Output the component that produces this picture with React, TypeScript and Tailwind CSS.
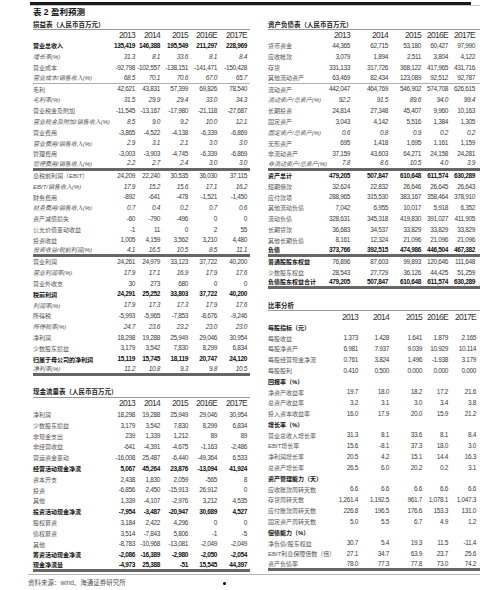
type Row = {
  l: string;
  v?: string[];
  b?: boolean;
  lb?: boolean;
  i?: boolean;
  line?: "thin" | "thick";
  sec?: boolean;
};

const LEFT_COLS = ["w-[26px]", "w-[25px]", "w-[28px]", "w-[29px]", "w-[30px]"];
const BS_COLS = ["w-[30px]", "w-[38px]", "w-[33px]", "w-[27px]", "w-[27px]"];
const RATIO_COLS = ["w-[30px]", "w-[31px]", "w-[33px]", "w-[26px]", "w-[28px]"];
const YEARS = ["2013", "2014", "2015", "2016E", "2017E"];

const r = (s: string) => s.split(" ");

const income: Row[] = [
  { l: "营业总收入", v: r("135,419 146,388 195,549 211,297 228,969"), b: true },
  { l: "增长率(%)", v: r("31.3 8.1 33.6 8.1 8.4"), i: true },
  { l: "营业成本", v: r("-92,798 -102,557 -138,151 -141,471 -150,428") },
  { l: "营业成本/销售收入(%)", v: r("68.5 70.1 70.6 67.0 65.7"), i: true, line: "thin" },
  { l: "毛利", v: r("42,621 43,831 57,399 69,826 78,540") },
  { l: "毛利率(%)", v: r("31.5 29.9 29.4 33.0 34.3"), i: true },
  { l: "营业税金及附加", v: r("-11,545 -13,167 -17,980 -21,118 -27,687") },
  { l: "营业税金及附加/销售收入(%)", v: r("8.5 9.0 9.2 10.0 12.1"), i: true },
  { l: "营业费用", v: r("-3,865 -4,522 -4,138 -6,339 -6,869") },
  { l: "营业费用/销售收入(%)", v: r("2.9 3.1 2.1 3.0 3.0"), i: true },
  { l: "管理费用", v: r("-3,003 -3,903 -4,745 -6,339 -6,869") },
  { l: "管理费用/销售收入(%)", v: r("2.2 2.7 2.4 3.0 3.0"), i: true, line: "thick" },
  { l: "息税前利润（EBIT）", v: r("24,209 22,240 30,535 36,030 37,115") },
  { l: "EBIT/销售收入(%)", v: r("17.9 15.2 15.6 17.1 16.2"), i: true },
  { l: "财务费用", v: r("-892 -641 -478 -1,521 -1,450") },
  { l: "财务费用/销售收入(%)", v: r("0.7 0.4 0.2 0.7 0.6"), i: true },
  { l: "资产减值损失", v: r("-60 -790 -496 0 0") },
  { l: "公允价值变动收益", v: r("-1 11 0 2 55") },
  { l: "投资收益", v: r("1,005 4,159 3,562 3,210 4,480") },
  { l: "投资收益/税前利润(%)", v: r("4.1 16.5 10.5 8.5 11.1"), i: true, line: "thick" },
  { l: "营业利润", v: r("24,261 24,979 33,123 37,722 40,200") },
  { l: "营业利润率(%)", v: r("17.9 17.1 16.9 17.9 17.6"), i: true },
  { l: "营业外收支", v: r("30 273 680 0 0") },
  { l: "税前利润", v: r("24,291 25,252 33,803 37,722 40,200"), b: true },
  { l: "利润率(%)", v: r("17.9 17.3 17.3 17.9 17.6"), i: true },
  { l: "所得税", v: r("-5,993 -5,965 -7,853 -8,676 -9,246") },
  { l: "所得税率(%)", v: r("24.7 23.6 23.2 23.0 23.0"), i: true },
  { l: "净利润", v: r("18,298 19,288 25,949 29,046 30,954") },
  { l: "少数股东损益", v: r("3,179 3,542 7,830 8,299 6,834") },
  { l: "归属于母公司的净利润", v: r("15,119 15,745 18,119 20,747 24,120"), b: true },
  { l: "净利率(%)", v: r("11.2 10.8 9.3 9.8 10.5"), i: true, line: "thick" },
];

const cash: Row[] = [
  { l: "净利润", v: r("18,298 19,288 25,949 29,046 30,954") },
  { l: "少数股东损益", v: r("3,179 3,542 7,830 8,299 6,834") },
  { l: "非现金支出", v: r("239 1,339 1,212 89 89") },
  { l: "非经营收益", v: r("-641 -4,391 -4,675 -1,163 -2,486") },
  { l: "营运资金变动", v: r("-16,008 25,487 -6,440 -49,364 6,533") },
  { l: "经营活动现金净流", v: r("5,067 45,264 23,876 -13,094 41,924"), b: true },
  { l: "资本开支", v: r("2,438 1,830 2,059 -565 8") },
  { l: "投资", v: r("-6,856 2,450 -15,913 26,912 0") },
  { l: "其他", v: r("1,339 -4,107 -2,976 3,212 4,535") },
  { l: "投资活动现金净流", v: r("-7,954 -3,487 -20,947 30,689 4,527"), b: true },
  { l: "股权募资", v: r("3,184 2,422 4,296 0 0") },
  { l: "债权募资", v: r("3,514 -7,843 5,806 -1 -5") },
  { l: "其他", v: r("-8,783 -10,968 -13,081 -2,049 -2,049") },
  { l: "筹资活动现金净流", v: r("-2,086 -16,389 -2,980 -2,050 -2,054"), b: true },
  { l: "现金净流量", v: r("-4,973 25,388 -51 15,545 44,397"), b: true, line: "thick" },
];

const balance: Row[] = [
  { l: "货币资金", v: r("44,365 62,715 53,180 60,427 97,990") },
  { l: "应收帐款", v: r("3,079 1,894 2,511 3,804 4,122") },
  { l: "存货", v: r("331,133 317,726 368,122 417,965 431,716") },
  { l: "其他流动资产", v: r("63,469 82,434 123,089 92,512 92,787"), line: "thin" },
  { l: "流动资产", v: r("442,047 464,769 546,902 574,708 626,615") },
  { l: "流动资产/总资产(%)", v: r("92.2 91.5 89.6 94.0 99.4"), i: true },
  { l: "长期投资", v: r("24,814 27,348 45,407 9,960 10,163") },
  { l: "固定资产", v: r("3,043 4,142 5,516 1,384 1,305") },
  { l: "固定资产/总资产(%)", v: r("0.6 0.8 0.9 0.2 0.2"), i: true },
  { l: "无形资产", v: r("695 1,418 1,695 1,161 1,159") },
  { l: "非流动资产", v: r("37,159 43,603 64,271 24,158 24,281") },
  { l: "非流动资产/总资产(%)", v: r("7.8 8.6 10.5 4.0 3.9"), i: true, line: "thick" },
  { l: "资产总计", v: r("479,205 507,847 610,648 611,574 630,289"), b: true },
  { l: "短期借款", v: r("32,624 22,832 26,646 26,645 26,643") },
  { l: "应付款项", v: r("288,965 315,530 383,167 358,464 378,910") },
  { l: "其他流动负债", v: r("7,042 6,955 10,017 5,918 6,352") },
  { l: "流动负债", v: r("328,631 345,318 419,830 391,027 411,905") },
  { l: "长期贷款", v: r("36,683 34,537 33,829 33,829 33,829") },
  { l: "其他长期负债", v: r("8,161 12,324 21,096 21,096 21,096") },
  { l: "负债", v: r("373,766 392,515 474,986 446,504 467,382"), b: true, line: "thick" },
  { l: "普通股股东权益", v: r("76,896 87,603 99,893 120,646 111,648"), lb: true },
  { l: "少数股东权益", v: r("28,543 27,729 36,126 44,425 51,259") },
  { l: "负债股东权益合计", v: r("479,205 507,847 610,648 611,574 630,289"), b: true, line: "thick" },
];

const ratio: Row[] = [
  { l: "每股指标（元）", sec: true },
  { l: "每股收益", v: r("1.373 1.428 1.641 1.879 2.165") },
  { l: "每股净资产", v: r("6.981 7.937 9.039 10.929 10.114") },
  { l: "每股经营现金净流", v: r("0.761 3.824 1.496 -1.938 3.179") },
  { l: "每股股利", v: r("0.410 0.500 0.000 0.000 0.000") },
  { l: "回报率（%）", sec: true },
  { l: "净资产收益率", v: r("19.7 18.0 18.2 17.2 21.6") },
  { l: "总资产收益率", v: r("3.2 3.1 3.0 3.4 3.8") },
  { l: "投入资本收益率", v: r("16.0 17.9 20.0 15.9 21.2") },
  { l: "增长率（%）", sec: true },
  { l: "营业总收入增长率", v: r("31.3 8.1 33.6 8.1 8.4") },
  { l: "EBIT增长率", v: r("15.6 -8.1 37.3 18.0 3.0") },
  { l: "净利润增长率", v: r("20.5 4.2 15.1 14.4 16.3") },
  { l: "总资产增长率", v: r("26.5 6.0 20.2 0.2 3.1") },
  { l: "资产管理能力（天）", sec: true },
  { l: "应收账款周转天数", v: r("6.6 6.6 6.6 6.6 6.6") },
  { l: "存货周转天数", v: r("1,261.4 1,192.5 961.7 1,078.1 1,047.3") },
  { l: "应付账款周转天数", v: r("226.8 196.5 176.6 153.3 131.0") },
  { l: "固定资产周转天数", v: r("5.0 5.5 6.7 4.9 1.2") },
  { l: "偿债能力（%）", sec: true },
  { l: "净负债/股东权益", v: r("30.7 5.4 19.3 11.5 -11.4") },
  { l: "EBIT利息保障倍数（倍）", v: r("27.1 34.7 63.9 23.7 25.6") },
  { l: "资产负债率", v: r("78.0 77.3 77.8 73.0 74.2"), line: "thick" },
];

function Title({ text }: { text: string }) {
  return (
    <div className="flex h-[12px] items-end border-b border-[#9a9a9a] pb-[1px] text-[6.5px] font-bold leading-none text-[#222]">
      {text}
    </div>
  );
}

function Years({ cols, pr, h }: { cols: string[]; pr: string; h: string }) {
  return (
    <div className={`flex items-center ${h} ${pr}`}>
      <div className="min-w-0 flex-1" />
      {YEARS.map((y, k) => (
        <div key={y} className={`${cols[k]} flex justify-end whitespace-nowrap text-[8.5px] leading-none tracking-[-0.7px] text-[#333]`}>
          {y}
        </div>
      ))}
    </div>
  );
}

function DataRow({ row, cols, pr }: { row: Row; cols: string[]; pr: string }) {
  const border =
    row.line === "thin"
      ? "border-b border-[#b0b0b0]"
      : row.line === "thick"
      ? "border-b-[3px] border-[#666]"
      : "";
  const labelBold = row.b || row.lb || row.sec;
  return (
    <div className={`flex h-[10.8px] items-center ${pr} ${border}`}>
      <div
        className={`min-w-0 flex-1 whitespace-nowrap text-[6px] leading-none ${
          labelBold ? "font-bold text-[#111]" : "text-[#555]"
        } ${row.i ? "italic" : ""}`}
      >
        {row.l}
      </div>
      {row.v?.map((x, k) => (
        <div
          key={k}
          className={`${cols[k]} flex justify-end whitespace-nowrap text-[6.5px] leading-none tracking-[-0.35px] ${
            row.b ? "font-bold text-[#111]" : "text-[#3a3a3a]"
          } ${row.i ? "italic" : ""}`}
        >
          {x}
        </div>
      ))}
    </div>
  );
}

export default function App() {
  return (
    <div className="h-[590px] w-[500px] overflow-hidden bg-white font-['Liberation_Sans','Noto_Sans_CJK_SC',sans-serif]">
      <div className="ml-[30px] mt-[2px] h-[3px] w-[441px] bg-[#1a1a1a]" />
      <div className="ml-[30px] h-px w-[450px] bg-[#c4c4c4]" />
      <div className="flex h-[12px] items-center pl-[33px] text-[8.5px] font-bold leading-none text-[#111]">
        表 2 盈利预测
      </div>

      <div className="flex pl-[33px]">
        {/* left column */}
        <div className="w-[217px]">
          <Title text="损益表（人民币百万元）" />
          <Years cols={LEFT_COLS} pr="pr-[3px]" h="h-[11px]" />
          {income.map((row, k) => (
            <DataRow key={k} row={row} cols={LEFT_COLS} pr="pr-[3px]" />
          ))}

          <div className="mt-[10px]">
            <Title text="现金流量表（人民币百万元）" />
          </div>
          <Years cols={LEFT_COLS} pr="pr-[3px]" h="h-[12px]" />
          {cash.map((row, k) => (
            <DataRow key={k} row={row} cols={LEFT_COLS} pr="pr-[3px]" />
          ))}
        </div>

        {/* right column */}
        <div className="ml-[18px] w-[212px]">
          <Title text="资产负债表（人民币百万元）" />
          <Years cols={BS_COLS} pr="pr-[5px]" h="h-[11px]" />
          {balance.map((row, k) => (
            <DataRow key={k} row={row} cols={BS_COLS} pr="pr-[5px]" />
          ))}

          <div className="mt-[10px]">
            <Title text="比率分析" />
          </div>
          <Years cols={RATIO_COLS} pr="pr-[4px]" h="h-[11px]" />
          {ratio.map((row, k) => (
            <DataRow key={k} row={row} cols={RATIO_COLS} pr="pr-[4px]" />
          ))}
        </div>
      </div>

      <div className="ml-[28px] mt-[2px] h-px w-[452px] bg-[#b5b5b5]" />
      <div className="mt-[3px] flex h-[12px] items-center">
        <div className="w-[223px] pl-[28px] text-[6.5px] leading-none text-[#555]">
          资料来源：wind、海通证券研究所
        </div>
        <div className="h-[3px] w-[3px] rounded-full bg-black" />
      </div>
    </div>
  );
}
